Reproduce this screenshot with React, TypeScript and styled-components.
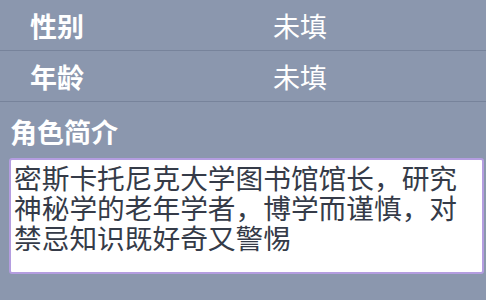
import { useEffect, useRef } from "react";
import styled, { createGlobalStyle } from "styled-components";

const GlobalStyle = createGlobalStyle`
  html, body {
    margin: 0;
    padding: 0;
    background: #8b97ae;
    overflow: hidden;
  }
  body {
    font-family: "Noto Sans CJK SC", "Noto Sans", sans-serif;
  }
`;

const Page = styled.div`
  width: 486px;
  height: 300px;
  background: #8b97ae;
  display: flex;
  flex-direction: column;
`;

const InfoRow = styled.div`
  display: grid;
  grid-template-columns: 243px 1fr;
  align-items: center;
  height: 51px;
  box-sizing: border-box;
  padding-left: 30px;
  border-bottom: 1px solid #77839b;
`;

const Label = styled.span`
  color: #ffffff;
  font-size: 27px;
  font-weight: 700;
  line-height: 1;
`;

const Value = styled.span`
  color: #ffffff;
  font-size: 27px;
  font-weight: 400;
  line-height: 1;
`;

const Section = styled.div`
  display: flex;
  flex-direction: column;
  padding: 13px 2px 0 9px;
  gap: 10px;
`;

const SectionTitle = styled.div`
  color: #ffffff;
  font-size: 27px;
  font-weight: 700;
  line-height: 33px;
  padding-left: 1px;
`;

const Bio = styled.textarea`
  box-sizing: border-box;
  width: 475px;
  height: 116px;
  margin: 0;
  padding: 2px 3px;
  border: 2px solid #b49de0;
  border-radius: 3px;
  outline: none;
  resize: none;
  background: #ffffff;
  color: #353b48;
  caret-color: #353b48;
  font-family: "Noto Sans CJK SC", "Noto Sans", sans-serif;
  font-size: 27.7px;
  line-height: 30px;
  overflow: hidden;
`;

const rows = [
  { label: "性别", value: "未填" },
  { label: "年龄", value: "未填" },
];

const bioText =
  "密斯卡托尼克大学图书馆馆长，研究神秘学的老年学者，博学而谨慎，对禁忌知识既好奇又警惕";

export default function App() {
  const bioRef = useRef<HTMLTextAreaElement>(null);

  useEffect(() => {
    const el = bioRef.current;
    if (el) {
      el.focus();
      el.setSelectionRange(bioText.length, bioText.length);
    }
  }, []);

  return (
    <>
      <GlobalStyle />
      <Page>
        {rows.map((row) => (
          <InfoRow key={row.label}>
            <Label>{row.label}</Label>
            <Value>{row.value}</Value>
          </InfoRow>
        ))}
        <Section>
          <SectionTitle>角色简介</SectionTitle>
          <Bio ref={bioRef} defaultValue={bioText} spellCheck={false} />
        </Section>
      </Page>
    </>
  );
}
